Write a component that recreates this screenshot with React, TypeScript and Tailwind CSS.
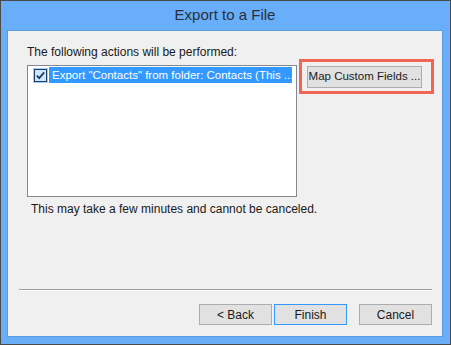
export default function App() {
  const font = { fontFamily: '"Liberation Sans", Arial, sans-serif' };
  return (
    <div
      className="w-[451px] h-[345px] border border-[#4a4a4a] bg-[#69aef8] flex flex-col pl-[6px] pr-[7px] pb-[7px] text-[#1a1a1a]"
      style={font}
    >
      <div className="h-[29px] flex items-center justify-center text-[15px] text-[#2b2f3a]">Export to a File</div>

      <div className="flex-1 border border-[#5a9be0] bg-[#f0f0f0] flex flex-col">
        <div className="pl-[19px] pt-[14px] text-[12px] leading-[14px]">The following actions will be performed:</div>

        <div className="flex items-start pl-[19px]">
          <div className="mt-[6px] w-[270px] h-[132px] border border-[#828790] bg-white p-px">
            <div className="flex items-center h-[16px]">
              <div className="ml-[4px] w-[15px] h-[15px] bg-[#9fcdf8] flex items-center justify-center">
                <svg width="13" height="13" viewBox="0 0 13 13">
                  <rect x="0.5" y="0.5" width="12" height="12" fill="#cfe6fc" stroke="#1f3c66" />
                  <path d="M2.8 6.6 L5.2 9.2 L10.2 3.4" fill="none" stroke="#1f3c66" strokeWidth="1.8" />
                </svg>
              </div>
              <div className="ml-[1px] w-[243px] h-[16px] bg-[#3399ff] text-white text-[11.5px] leading-[16px] pl-[3px] whitespace-nowrap overflow-hidden">
                Export "Contacts" from folder: Contacts (This ...
              </div>
            </div>
          </div>

          <div className="ml-[2px] border-[3px] border-[#f26552] pl-[5px] pr-[9px] pt-[4px] pb-[3px]">
            <button className="w-[115px] h-[22px] bg-[#e1e1e1] border border-[#adadad] text-[11.5px] text-[#1a1a1a] flex items-center justify-center whitespace-nowrap px-0">
              Map Custom Fields ...
            </button>
          </div>
        </div>

        <div className="pl-[23px] mt-[5px] text-[12px] leading-[15px]">
          This may take a few minutes and cannot be canceled.
        </div>

        <div className="flex-1" />

        <div className="ml-[11px] mr-[10px] border-t border-[#a0a0a0] border-b border-b-white" />

        <div className="flex justify-end mr-[10px] mt-[13px] mb-[11px] text-[12px]">
          <button className="w-[73px] h-[21px] bg-[#e1e1e1] border border-[#adadad] flex items-center justify-center">
            &lt; Back
          </button>
          <button className="ml-[2px] w-[73px] h-[21px] bg-[#e1e1e1] border border-[#3399ff] flex items-center justify-center">
            Finish
          </button>
          <button className="ml-[12px] w-[73px] h-[21px] bg-[#e1e1e1] border border-[#adadad] flex items-center justify-center">
            Cancel
          </button>
        </div>
      </div>
    </div>
  );
}
